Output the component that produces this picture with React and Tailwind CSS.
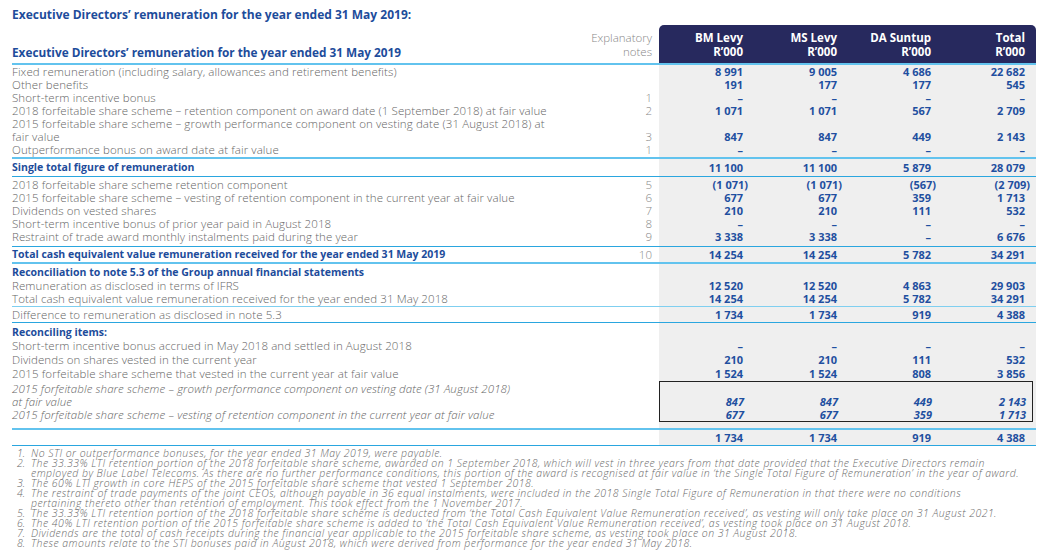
const FONT = "font-['Open_Sans','Liberation_Sans',sans-serif]";
const GRAY_BG = "bg-[linear-gradient(to_right,transparent_647px,#efefef_647px)]";
const COLS = "grid grid-cols-[568px_65px_377px] gap-x-[7px]";

const THICK = "border-b-2 border-[#62c3ee]";
const THIN = "border-b border-[#2aa6df]";
const SOFT = "border-b border-[#7fcff0]";

function Values({values, italic, tall}) {
  return (
    <div className="grid grid-cols-[84px_94px_94px_94px] pr-[11px] items-end">
      {values.map((v, i) => (
        <div
          key={i}
          className={`text-right whitespace-nowrap font-bold text-[11px] text-[#1f4fa0] ${tall ? "leading-[14px]" : "leading-[13px]"} ${italic ? "italic" : ""}`}
        >
          <span className={v.startsWith("(") ? "mr-[-5px]" : ""}>{v}</span>
        </div>
      ))}
    </div>
  );
}

function Row({label, note, values, bold, italic, tall}) {
  const lead = tall ? "leading-[14px]" : "leading-[13px]";
  return (
    <div className={COLS}>
      <div
        className={`whitespace-nowrap ${lead} ${bold ? "font-bold text-[10.5px] text-[#1d4c9b]" : "font-light text-[11.5px] tracking-[0.1px] text-[#666]"} ${italic ? "italic" : ""}`}
      >
        {label}
      </div>
      <div className={`text-right self-end font-light text-[11.5px] text-[#888] ${lead}`}>{note}</div>
      {values ? <Values values={values} italic={italic} tall={tall} /> : <div />}
    </div>
  );
}

const D = ["–", "–", "–", "–"];

const FOOTNOTES = [
  ["1.", "No STI or outperformance bonuses, for the year ended 31 May 2019, were payable."],
  [
    "2.",
    "The 33.33% LTI retention portion of the 2018 forfeitable share scheme, awarded on 1 September 2018, which will vest in three years from that date provided that the Executive Directors remain",
    "employed by Blue Label Telecoms. As there are no further performance conditions, this portion of the award is recognised at fair value in ‘the Single Total Figure of Remuneration’ in the year of award.",
  ],
  ["3.", "The 60% LTI growth in core HEPS of the 2015 forfeitable share scheme that vested 1 September 2018."],
  [
    "4.",
    "The restraint of trade payments of the joint CEOs, although payable in 36 equal instalments, were included in the 2018 Single Total Figure of Remuneration in that there were no conditions",
    "pertaining thereto other than retention of employment. This took effect from the 1 November 2017.",
  ],
  ["5.", "The 33.33% LTI retention portion of the 2018 forfeitable share scheme is deducted from ‘the Total Cash Equivalent Value Remuneration received’, as vesting will only take place on 31 August 2021."],
  ["6.", "The 40% LTI retention portion of the 2015 forfeitable share scheme is added to ‘the Total Cash Equivalent Value Remuneration received’, as vesting took place on 31 August 2018."],
  ["7.", "Dividends are the total of cash receipts during the financial year applicable to the 2015 forfeitable share scheme, as vesting took place on 31 August 2018."],
  ["8.", "These amounts relate to the STI bonuses paid in August 2018, which were derived from performance for the year ended 31 May 2018."],
];

export default function App() {
  return (
    <div className={`w-[1057px] h-[550px] bg-white px-3 pt-[7px] overflow-hidden ${FONT}`}>
      <div className="w-[1024px]">
        <h1 className="text-[12px] leading-[16px] font-bold text-[#1d4c9b]">
          Executive Directors’ remuneration for the year ended 31 May 2019:
        </h1>

        {/* header */}
        <div className={`mt-[2px] ${COLS} h-[38px] ${THICK} box-content`}>
          <div className="self-end text-[11.8px] leading-[14px] font-bold text-[#1d4c9b] pb-[4px]">
            Executive Directors’ remuneration for the year ended 31 May 2019
          </div>
          <div className="self-end text-right font-light text-[11.5px] leading-[14px] text-[#888] pb-[4px]">
            Explanatory
            <br />
            notes
          </div>
          <div className="grid grid-cols-[84px_94px_94px_94px] pr-[11px] items-end bg-[#27295e] rounded-t-[5px] pb-[4px]">
            {["BM Levy", "MS Levy", "DA Suntup", "Total"].map((n) => (
              <div key={n} className="text-right text-white font-bold text-[11.5px] leading-[14px]">
                {n}
                <br />
                R’000
              </div>
            ))}
          </div>
        </div>

        <div className={`${GRAY_BG} pb-[1px] ${THICK}`}>
          <Row label="Fixed remuneration (including salary, allowances and retirement benefits)" values={["8 991", "9 005", "4 686", "22 682"]} />
          <Row label="Other benefits" values={["191", "177", "177", "545"]} />
          <Row label="Short-term incentive bonus" note="1" values={D} />
          <Row label="2018 forfeitable share scheme – retention component on award date (1 September 2018) at fair value" note="2" values={["1 071", "1 071", "567", "2 709"]} />
          <Row
            label={
              <>
                2015 forfeitable share scheme – growth performance component on vesting date (31 August 2018) at
                <br />
                fair value
              </>
            }
            note="3"
            values={["847", "847", "449", "2 143"]}
          />
          <Row label="Outperformance bonus on award date at fair value" note="1" values={D} />
        </div>

        <div className={`${GRAY_BG} py-[2px] ${THIN}`}>
          <Row bold label="Single total figure of remuneration" values={["11 100", "11 100", "5 879", "28 079"]} />
        </div>

        <div className={`${GRAY_BG} pt-[1px] pb-[3px] ${THIN}`}>
          <Row label="2018 forfeitable share scheme retention component" note="5" values={["(1 071)", "(1 071)", "(567)", "(2 709)"]} />
          <Row label="2015 forfeitable share scheme – vesting of retention component in the current year at fair value" note="6" values={["677", "677", "359", "1 713"]} />
          <Row label="Dividends on vested shares" note="7" values={["210", "210", "111", "532"]} />
          <Row label="Short-term incentive bonus of prior year paid in August 2018" note="8" values={D} />
          <Row label="Restraint of trade award monthly instalments paid during the year" note="9" values={["3 338", "3 338", "–", "6 676"]} />
        </div>

        <div className={`${GRAY_BG} pt-[1px] pb-[1px] ${THICK}`}>
          <Row bold label="Total cash equivalent value remuneration received for the year ended 31 May 2019" note="10" values={["14 254", "14 254", "5 782", "34 291"]} />
        </div>

        <div className={`${GRAY_BG} pt-[2px] pb-[1px] ${SOFT}`}>
          <Row bold label="Reconciliation to note 5.3 of the Group annual financial statements" />
          <Row label="Remuneration as disclosed in terms of IFRS" values={["12 520", "12 520", "4 863", "29 903"]} />
          <Row label="Total cash equivalent value remuneration received for the year ended 31 May 2018" values={["14 254", "14 254", "5 782", "34 291"]} />
        </div>

        <div className={`${GRAY_BG} pt-[1px] pb-[1px] ${THIN}`}>
          <Row label="Difference to remuneration as disclosed in note 5.3" values={["1 734", "1 734", "919", "4 388"]} />
        </div>

        <div className={`${GRAY_BG} pt-[3px] pb-[6px] ${THICK}`}>
          <Row bold label="Reconciling items:" />
          <Row tall label="Short-term incentive bonus accrued in May 2018 and settled in August 2018" values={D} />
          <Row tall label="Dividends on shares vested in the current year" values={["210", "210", "111", "532"]} />
          <Row tall label="2015 forfeitable share scheme that vested in the current year at fair value" values={["1 524", "1 524", "808", "3 856"]} />
          <div className={COLS}>
            <div className="pt-px whitespace-nowrap font-light italic text-[11.5px] tracking-[0.1px] leading-[13px] text-[#666]">
              2015 forfeitable share scheme – growth performance component on vesting date (31 August 2018)
              <br />
              at fair value
              <br />
              2015 forfeitable share scheme – vesting of retention component in the current year at fair value
            </div>
            <div />
            <div className="mr-[3px] border border-[#222]">
              <div className="h-[13px]" />
              <Values italic values={["847", "847", "449", "2 143"]} />
              <Values italic values={["677", "677", "359", "1 713"]} />
            </div>
          </div>
        </div>

        <div className={`${GRAY_BG} pt-[1px] pb-[1px] ${THIN}`}>
          <Row label="" values={["1 734", "1 734", "919", "4 388"]} />
        </div>

        <div className="pt-[2px] text-[10.5px] tracking-[0.45px] leading-[10px] italic font-light text-[#6a6a6a]">
          {FOOTNOTES.map(([n, ...lines]) => (
            <div key={n} className="flex">
              <div className="w-[19px] pl-[5px] shrink-0 tracking-normal">{n}</div>
              <div className="whitespace-nowrap">
                {lines.map((l, i) => (
                  <div key={i}>{l}</div>
                ))}
              </div>
            </div>
          ))}
        </div>
      </div>
    </div>
  );
}
